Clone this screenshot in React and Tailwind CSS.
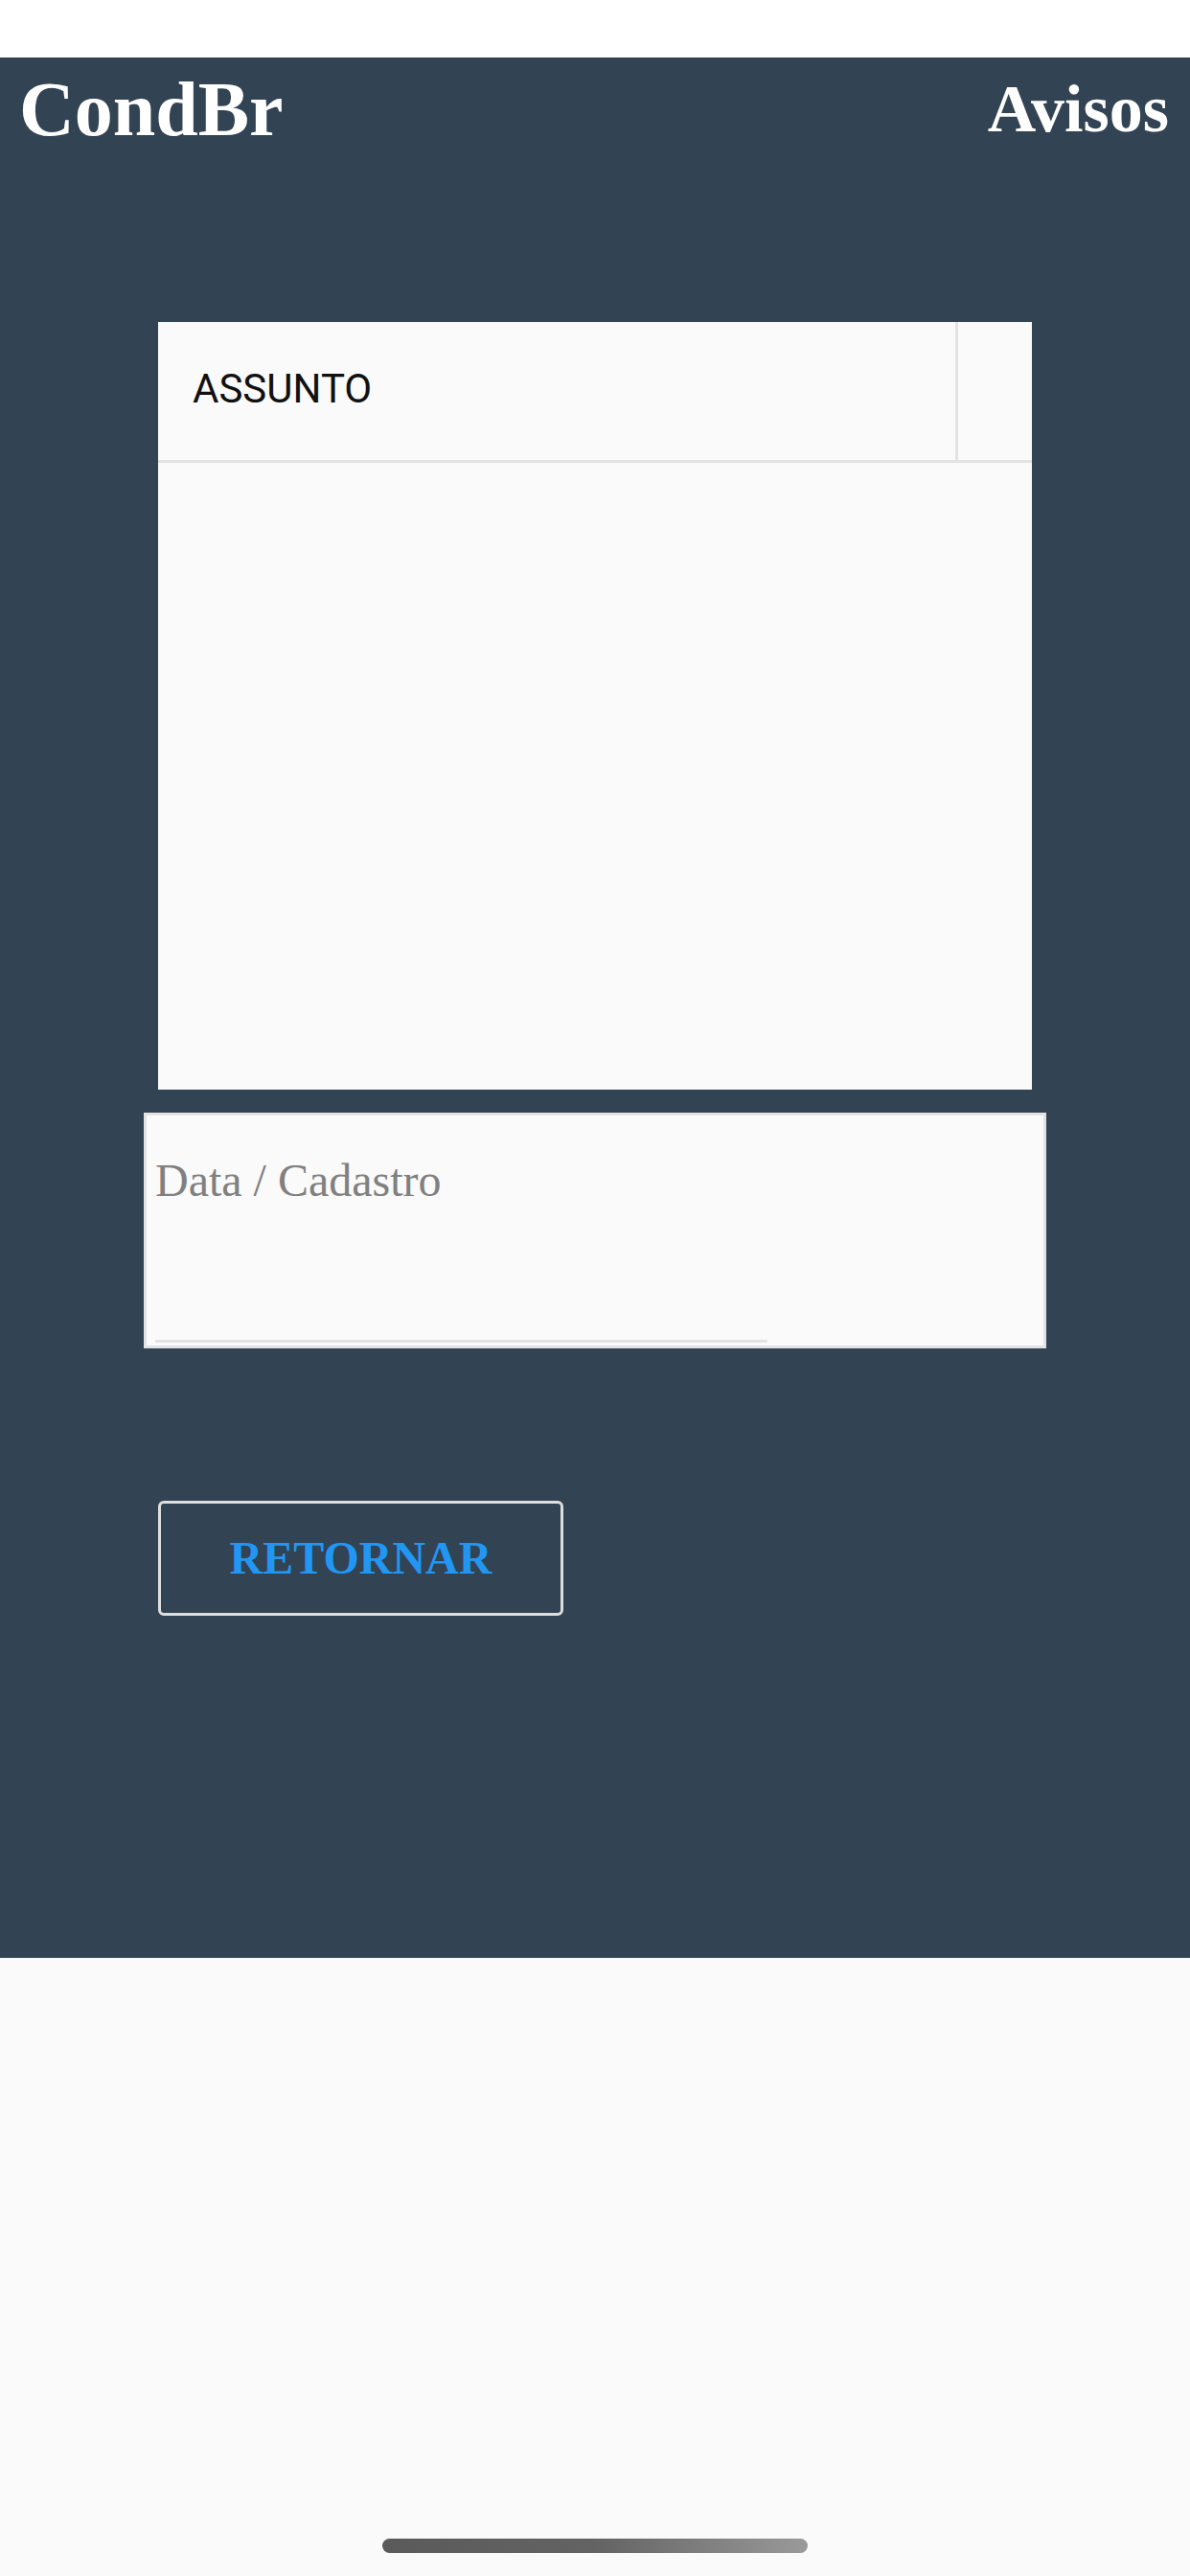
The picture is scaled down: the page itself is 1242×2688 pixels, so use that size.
import React from 'react';

const serif = "font-['Liberation_Serif','Times_New_Roman',serif]";

function Header() {
  return (
    <div className={`flex h-[120px] justify-between text-white font-bold ${serif}`}>
      <div className="ml-[20px] mt-[14px] text-[80px] leading-none">CondBr</div>
      <div className="mr-[22px] mt-[19px] text-[70px] leading-none">Avisos</div>
    </div>
  );
}

function AssuntoCard() {
  return (
    <div className="ml-[165px] mt-[156px] flex w-[912px] flex-col bg-[#fafafa]">
      <div className="flex h-[147px] border-b-[3px] border-[#e3e3e3]">
        <div className="flex flex-1 items-center pb-[4px] pl-[36px] font-['Roboto',sans-serif] text-[42px] leading-none text-[#111]">
          ASSUNTO
        </div>
        <div className="w-[80px] border-l-[3px] border-[#e3e3e3]" />
      </div>
      <div className="h-[654px]" />
    </div>
  );
}

function DataCard() {
  return (
    <div className="ml-[150px] mt-[24px] flex h-[246px] w-[942px] flex-col border-[3px] border-[#e3e3e3] bg-[#fafafa]">
      <div className={`ml-[9px] mt-[44px] text-[48px] leading-none text-[#808080] ${serif}`}>
        Data / Cadastro
      </div>
      <div className="flex-1" />
      <div className="mb-[3px] ml-[9px] h-[3px] w-[639px] bg-[#e3e3e3]" />
    </div>
  );
}

export default function App() {
  return (
    <div className="flex h-[2688px] w-[1242px] flex-col bg-[#fafafa]">
      <div className="h-[60px] bg-white" />
      <div className="flex h-[1983px] flex-col bg-[#324354]">
        <Header />
        <AssuntoCard />
        <DataCard />
        <button
          className={`ml-[165px] mt-[159px] flex h-[120px] w-[423px] items-center justify-center rounded-[6px] border-[3px] border-[#dedede] text-[48px] font-bold leading-none text-[#2196f3] ${serif}`}
        >
          RETORNAR
        </button>
      </div>
      <div className="mx-auto mt-[606px] h-[15px] w-[444px] rounded-full bg-gradient-to-r from-[#5a5a5a] via-[#636363] to-[#9a9a9a]" />
    </div>
  );
}
